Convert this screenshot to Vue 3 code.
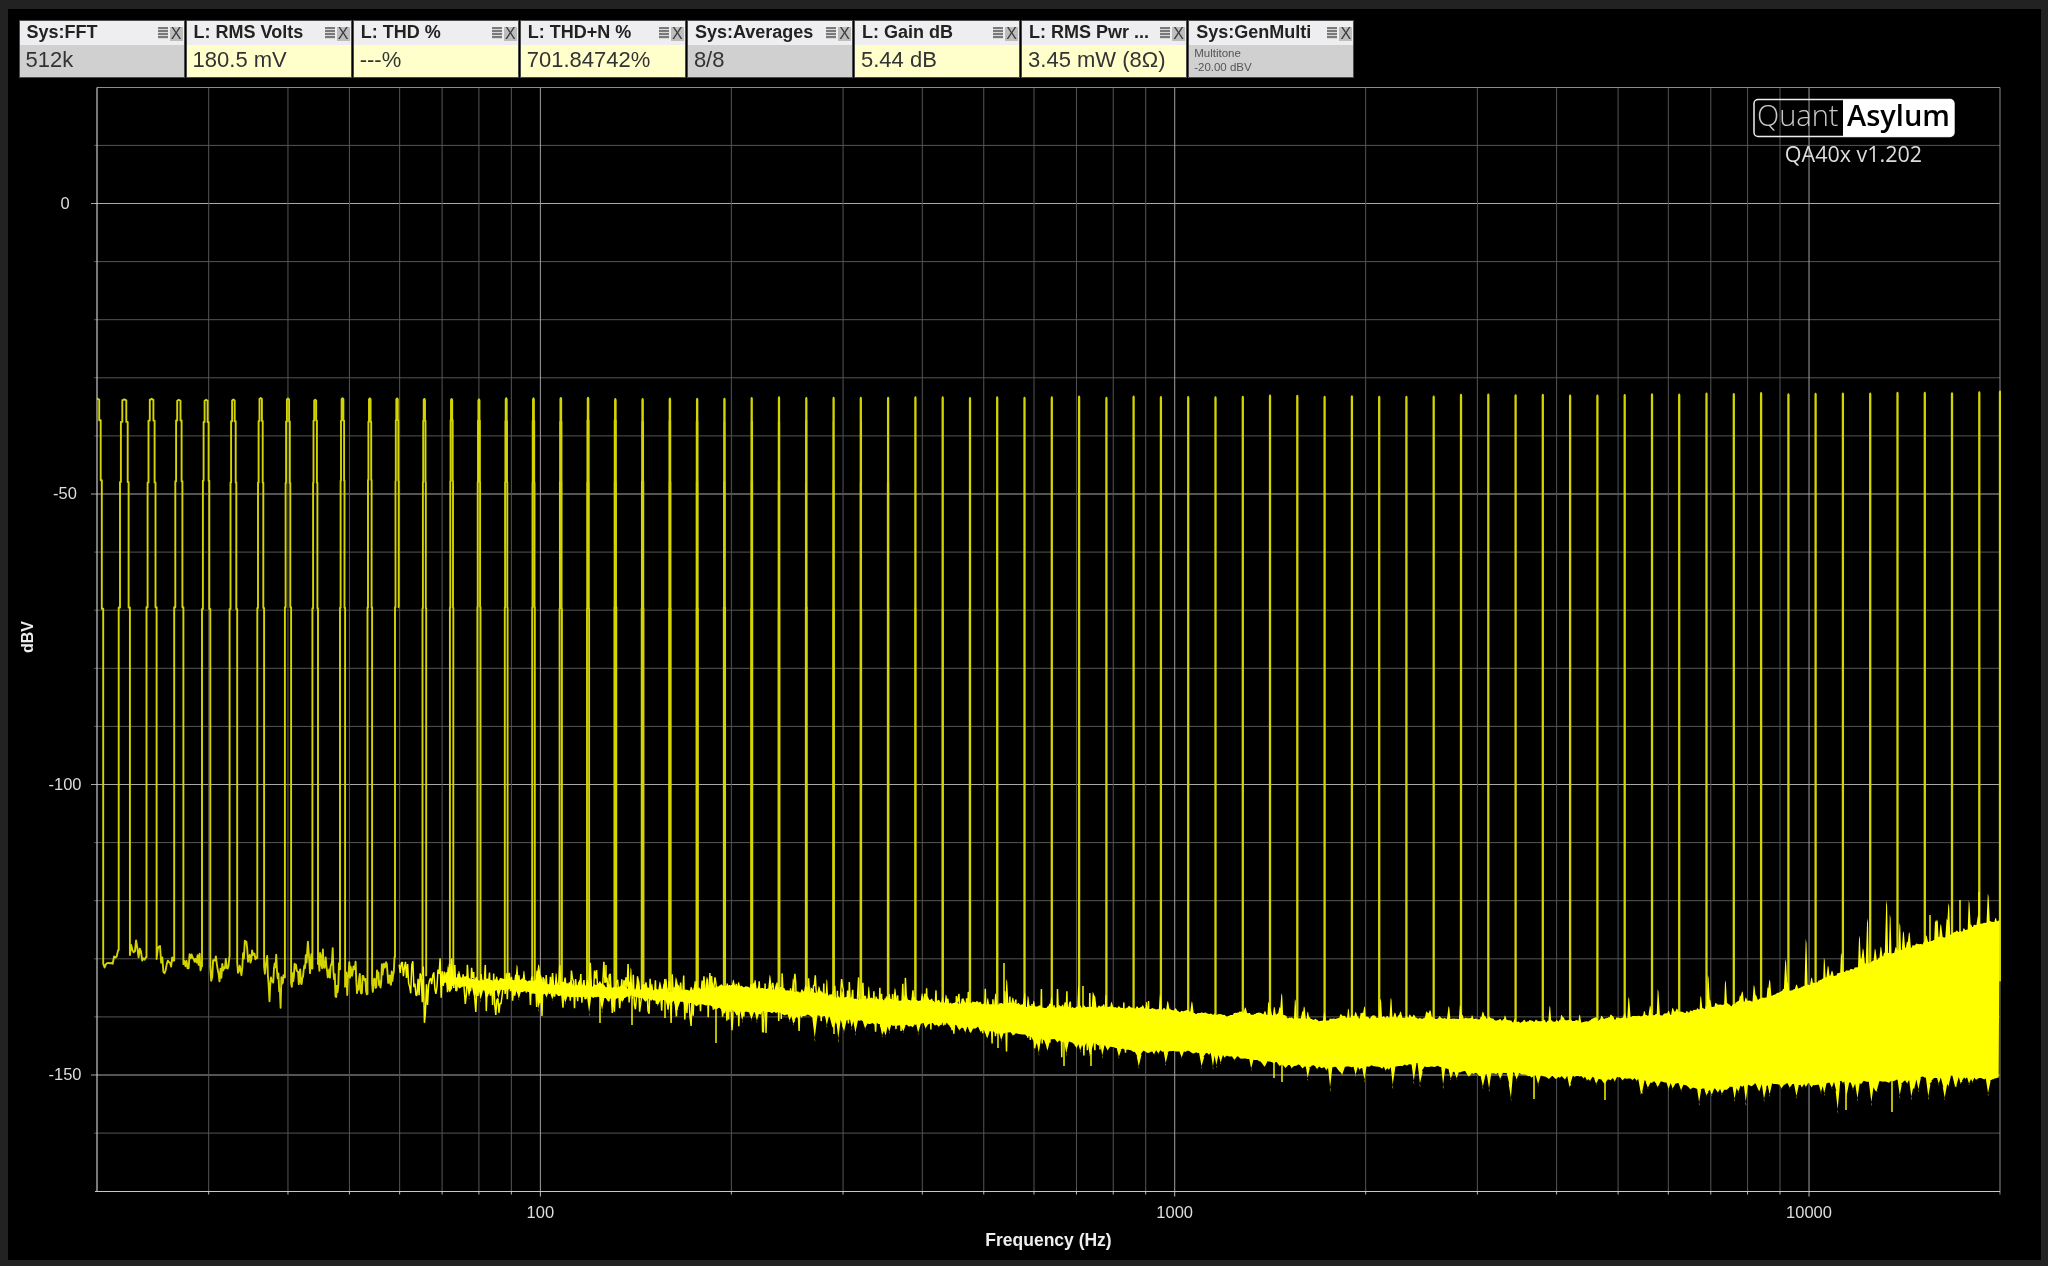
<script setup>
const L = 97, R = 2000, T = 87.5, B = 1191.5
const DEC = (R - L) / 3
const dbY = db => 203.5 + (-db) * 5.81
const fX = f => L + Math.log10(f / 20) * DEC
const xF = x => 20 * Math.pow(10, (x - L) / DEC)
const binPx = x => DEC * Math.log10(1 + 0.09375 / xF(x))

function rng(seed) {
  let a = seed
  return () => {
    a |= 0; a = (a + 0x6d2b79f5) | 0
    let t = Math.imul(a ^ (a >>> 15), 1 | a)
    t = (t + Math.imul(t ^ (t >>> 7), 61 | t)) ^ t
    return ((t ^ (t >>> 14)) >>> 0) / 4294967296
  }
}
const rand = rng(40217)
const gauss = () => (rand() + rand() + rand() + rand() - 2) * 1.73
const expo = m => -Math.log(1 - rand() * 0.999) * m

const ENV = [
  [97, 947, 966], [200, 950, 972], [300, 956, 984], [400, 964, 990], [500, 972, 998],
  [600, 976, 1002], [700, 981, 1008], [800, 986, 1016], [900, 998, 1027], [1000, 1005, 1033],
  [1100, 1010, 1043], [1200, 1014, 1052], [1300, 1018, 1064], [1500, 1020, 1073], [1600, 1016, 1078],
  [1700, 1008, 1083], [1809, 986, 1082], [1900, 951, 1080], [2000, 918, 1076]
]
function env(x) {
  for (let i = 1; i < ENV.length; i++) {
    if (x <= ENV[i][0]) {
      const a = ENV[i - 1], b = ENV[i], k = (x - a[0]) / (b[0] - a[0])
      return [a[1] + (b[1] - a[1]) * k, a[2] + (b[2] - a[2]) * k]
    }
  }
  return [918, 1076]
}
const n1 = v => v.toFixed(1)

const tones = []
for (let i = 0; i < 70; i++) tones.push(L + 27.28 * i)
tones.push(R)

let peaks = ''
let lowAr = 0
function lowNoise(x0, x1, first) {
  let d = ''
  let x = x0
  let y = 0
  let started = !first
  while (x < x1) {
    const [t, b] = env(x)
    const mid = (t + b) / 2, half = (b - t) / 2
    lowAr = 0.72 * lowAr + 0.55 * gauss()
    y = mid + half * 1.05 * lowAr + gauss() * 1.4
    if (rand() < 0.025) y += expo(8)
    d += (started ? 'L' : 'M') + n1(x) + ' ' + n1(y)
    started = true
    x += Math.max(binPx(x) * 1.1, 0.7)
  }
  return { d, y }
}
function peak(x, i, footY, isLow) {
  const b = binPx(x)
  const w = [4.8 * b, 3.7 * b, 2.9 * b, 1.7 * b].map(v => Math.max(v, 0.2))
  const top = 399 - 7 * Math.pow(i / 70, 2) + (rand() - 0.5) * 1.8
  const lv = [607 + rand() * 2, 480 + rand() * 3, 420 + rand() * 2]
  const pts = []
  pts.push([x - w[0], footY], [x - w[0], lv[0]], [x - w[1], lv[0]], [x - w[1], lv[1]], [x - w[2], lv[1]], [x - w[2], lv[2]], [x - w[3], lv[2]], [x - w[3], top + 1], [x, top])
  pts.push([x + w[3], top + 1], [x + w[3], lv[2]], [x + w[2], lv[2]], [x + w[2], lv[1]], [x + w[1], lv[1]], [x + w[1], lv[0]], [x + w[0], lv[0]])
  return pts.map((p, k) => (k === 0 && !isLow ? 'M' : 'L') + n1(p[0]) + ' ' + n1(p[1])).join('')
}

let prevEnd = L
tones.forEach((x, i) => {
  const hw = 4.8 * binPx(x)
  if (x < 420) {
    if (x - hw > prevEnd) {
      const seg = lowNoise(prevEnd, x - hw, peaks === '')
      peaks += seg.d
      peaks += peak(x, i, seg.y, true)
    } else {
      peaks += (peaks ? '' : 'M' + n1(x - hw) + ' 955') + peak(x, i, 955, !!peaks)
    }
    prevEnd = x + hw
  } else {
    const [t, b] = env(x)
    peaks += peak(x, i, t + (b - t) * 0.4, false) + 'L' + n1(x + Math.max(hw, 0.2)) + ' ' + n1(t + (b - t) * 0.4)
  }
})

let band = ''
let bx = prevEnd
let bandStarted = false
let wm = 0
while (bx <= 1150) {
  const [t, b] = env(bx)
  wm = 0.96 * wm + 0.6 * gauss()
  const mid = (t + b) / 2 + wm, half = (b - t) / 2
  let y = mid + half * 0.85 * gauss()
  if (rand() < 0.09) y += rand() < 0.35 ? -expo(6) : expo(9)
  band += (bandStarted ? 'L' : 'M') + n1(bx) + ' ' + n1(y)
  bandStarted = true
  bx += bx < 700 ? 1.05 : 0.85
}
for (const [sx, sy] of [[716, 1043], [600, 1023], [632, 1025], [665, 1018], [834, 1034], [998, 1048], [1064, 1066], [1091, 1066], [1274, 1078], [1282, 1082], [1534, 1099], [1605, 1100], [1846, 1110], [1892, 1112]]) {
  const [t] = env(sx)
  band += 'M' + n1(sx) + ' ' + n1(t + 12) + 'L' + n1(sx) + ' ' + sy
}
for (const [sx, sy] of [[1004, 963], [1083, 986], [606, 965], [1979, 892], [1960, 900], [1930, 915]]) {
  const [t] = env(sx)
  band += 'M' + n1(sx) + ' ' + n1(t + 6) + 'L' + n1(sx) + ' ' + sy
}
function bodyWidth(x) {
  if (x < 800) return 0.25 + 0.35 * (x - 440) / 360
  if (x < 1120) return 0.6 + 0.4 * (x - 800) / 320
  return 1
}
let corePts = ''
{
  const top = [], bot = []
  let a = 0, c = 0, tx = 440
  while (tx <= R) {
    const [t, b] = env(tx)
    a = 0.97 * a + 0.5 * gauss()
    c = 0.97 * c + 0.6 * gauss()
    const f = bodyWidth(tx)
    const m = (t + b) / 2
    const up = m - (b - t) / 2 * f + a
    const dn = m + (b - t) / 2 * f + c
    const mu = tx > 1800 ? 15 : tx > 1650 ? 10 : 5
    const su = rand() < 0.42 ? expo(mu) : rand() * 2
    const sd = rand() < 0.4 ? expo(tx > 1700 ? 8 : 6.5) : rand() * 2
    top.push(n1(tx) + ' ' + n1(up - su))
    top.push(n1(tx + 0.8) + ' ' + n1(up - su * 0.9))
    bot.unshift(n1(tx + 0.8) + ' ' + n1(dn + sd))
    bot.unshift(n1(tx) + ' ' + n1(dn + sd * 0.9))
    tx += 1.5 + rand() * 0.8
  }
  corePts = top.concat(bot).join(' ')
}

const hLines = []
for (let db = 10; db >= -160; db -= 10) {
  const major = db % 50 === 0
  hLines.push({ y: dbY(db), major, x0: L - (major ? 6 : 3) })
}
const vLines = []
for (const d of [10, 100, 1000, 10000]) {
  for (let m = 1; m <= 9; m++) {
    const f = d * m
    if (f <= 20 || f >= 20000) continue
    vLines.push({ x: fX(f), major: m === 1 })
  }
}
const yLabels = [0, -50, -100, -150].map(v => ({ t: String(v), y: dbY(v) + 5 }))
const xLabels = [100, 1000, 10000].map(v => ({ t: String(v), x: fX(v) }))

const chips = [
  { title: 'Sys:FFT', value: '512k', live: false },
  { title: 'L: RMS Volts', value: '180.5 mV', live: true },
  { title: 'L: THD %', value: '---%', live: true },
  { title: 'L: THD+N %', value: '701.84742%', live: true },
  { title: 'Sys:Averages', value: '8/8', live: false },
  { title: 'L: Gain dB', value: '5.44 dB', live: true },
  { title: 'L: RMS Pwr ...', value: '3.45 mW (8Ω)', live: true },
  { title: 'Sys:GenMulti', lines: ['Multitone', '-20.00 dBV'], live: false }
]
</script>

<template>
  <div class="frame">
    <div class="panel">
      <div class="chips">
        <div v-for="c in chips" :key="c.title" class="chip">
          <div class="head">
            <span class="title">{{ c.title }}</span>
            <span class="menu"></span>
            <span class="close">X</span>
          </div>
          <div class="body" :class="{ live: c.live }">
            <span v-if="c.value" class="value">{{ c.value }}</span>
            <div v-else class="small">
              <div v-for="l in c.lines" :key="l">{{ l }}</div>
            </div>
          </div>
        </div>
      </div>
      <svg class="plot" viewBox="8 78 2033 1182" width="2033" height="1182">
        <defs>
          <clipPath id="plotClip"><rect :x="L" :y="T" :width="R - L + 1" :height="B - T" /></clipPath>
        </defs>
        <line v-for="h in hLines" :key="h.y" :x1="h.x0" :x2="R" :y1="h.y" :y2="h.y" :class="h.major ? 'gmaj' : 'gmin'" />
        <template v-for="v in vLines" :key="v.x">
          <line :x1="v.x" :x2="v.x" :y1="T" :y2="B" :class="v.major ? 'vmaj' : 'vmin'" />
          <line :x1="v.x" :x2="v.x" :y1="B" :y2="B + (v.major ? 5 : 3)" class="tick" />
        </template>
        <line :x1="L" :x2="R" :y1="T" :y2="T" class="edge" />
        <line :x1="R" :x2="R" :y1="T" :y2="B + 3" class="edge" />
        <line :x1="L" :x2="L" :y1="T" :y2="B" class="axis" />
        <line :x1="L - 2" :x2="R" :y1="B" :y2="B" class="axis" />

        <g clip-path="url(#plotClip)">
          <path :d="peaks" class="tone" />
          <path :d="band" class="band" />
          <polygon :points="corePts" class="core" />
        </g>

        <text v-for="l in yLabels" :key="l.t" x="65" :y="l.y" text-anchor="middle" class="lab">{{ l.t }}</text>
        <text v-for="l in xLabels" :key="l.t" :x="l.x" y="1218" text-anchor="middle" class="lab">{{ l.t }}</text>
        <text x="1048.5" y="1246" text-anchor="middle" class="axt">Frequency (Hz)</text>
        <text transform="translate(33 637) rotate(-90)" text-anchor="middle" class="axt small-axt">dBV</text>

        <rect x="1754" y="99.5" width="200" height="37" rx="4" class="logo-box" />
        <path d="M1843 99.5H1950a4 4 0 0 1 4 4V132.500a4 4 0 0 1 -4 4H1843Z" class="logo-fill" />
        <text x="1757" y="126" class="quant">Quant</text>
        <text x="1847" y="126" class="asylum">Asylum</text>
        <text x="1853.500" y="161.500" text-anchor="middle" class="ver">QA40x v1.202</text>
      </svg>
    </div>
  </div>
</template>

<style scoped>
.frame {
  width: 2048px;
  height: 1266px;
  box-sizing: border-box;
  padding: 9px 7px 6px 8px;
  background: #222;
  overflow: hidden;
  filter: blur(0.45px);
}
.panel {
  height: 100%;
  display: flex;
  flex-direction: column;
  background: #000;
}
.chips {
  display: flex;
  gap: 1px;
  padding: 10.500px 0 0 10.500px;
  height: 69px;
  box-sizing: border-box;
}
.chip {
  width: 166.100px;
  height: 58.500px;
  box-sizing: border-box;
  border: 1px solid #4c4c4c;
  display: flex;
  flex-direction: column;
  font-family: "Liberation Sans", Arial, sans-serif;
}
.head {
  height: 24px;
  background: #eeeef0;
  display: flex;
  align-items: center;
  padding: 0 0 0 7px;
}
.title {
  font-size: 18px;
  font-weight: 700;
  color: #222;
  flex: 1;
  white-space: nowrap;
  overflow: hidden;
}
.menu {
  width: 10px;
  height: 12px;
  margin-right: 2px;
  margin-top: 1px;
  background: repeating-linear-gradient(#7a7a7a 0 2px, #d8d8d8 2px 3px);
}
.close {
  width: 13px;
  height: 14px;
  margin-right: 1px;
  margin-top: 2px;
  background: #bdbdbd;
  color: #3c3c3c;
  font-size: 16px;
  line-height: 14px;
  text-align: center;
}
.body {
  flex: 1;
  background: #d0d0d0;
  display: flex;
  align-items: center;
  padding: 0 0 2px 6px;
}
.body.live {
  background: #ffffcc;
}
.value {
  font-size: 22px;
  color: #333;
  white-space: nowrap;
}
.small {
  font-size: 11.5px;
  line-height: 14px;
  color: #555;
  margin-left: -1px;
}
.plot {
  display: block;
  flex: none;
}
.gmin { stroke: #555; stroke-width: 1; }
.gmaj { stroke: #a8a8a8; stroke-width: 1; }
.vmin { stroke: #555; stroke-width: 1; }
.vmaj { stroke: #a0a0a0; stroke-width: 1; }
.tick { stroke: #bbb; stroke-width: 1; }
.edge { stroke: #8c8c8c; stroke-width: 1; }
.axis { stroke: #c8c8c8; stroke-width: 1.2; }
.tone { fill: none; stroke: #d4d400; stroke-width: 1.9; stroke-linejoin: round; }
.band { fill: none; stroke: #f6f600; stroke-width: 1.5; stroke-linejoin: bevel; }
.core { fill: #ff0; stroke: none; }
.lab { font: 16.500px "Liberation Sans", Arial, sans-serif; fill: #ddd; }
.axt { font: 700 17.500px "Liberation Sans", Arial, sans-serif; fill: #eee; }
.small-axt { font-size: 16px; }
.logo-box { fill: none; stroke: #eee; stroke-width: 1.5; }
.logo-fill { fill: #fff; }
.quant { font: 300 29px "Open Sans", sans-serif; fill: #c8c8c8; }
.asylum { font: 600 29px "Open Sans", sans-serif; fill: #000; }
.ver { font: 400 21.500px "Open Sans", sans-serif; fill: #ddd; }
</style>
